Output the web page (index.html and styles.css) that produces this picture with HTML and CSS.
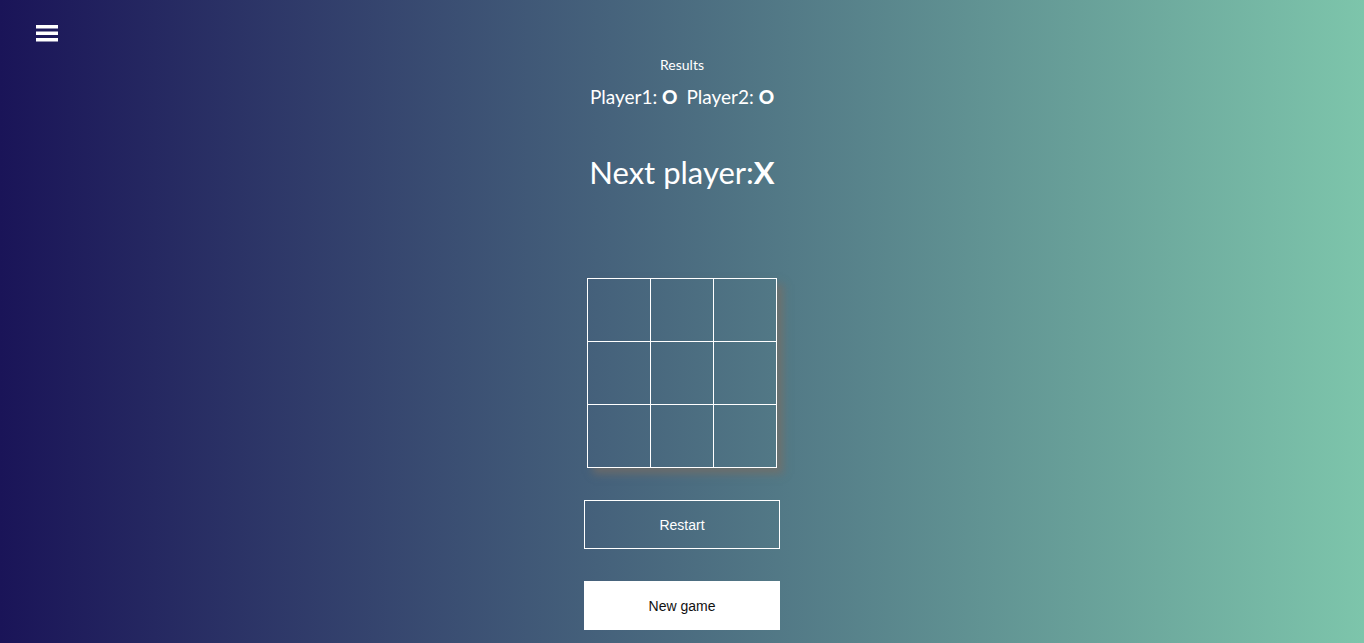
FILE: index.html
```html
<!DOCTYPE html>
<html>
<head>
<meta charset="utf-8">
<link rel="stylesheet" href="styles.css">
</head>
<body>
<div class="page">
  <button class="menu" aria-label="menu">
    <svg width="22" height="18" viewBox="0 0 22 18"><rect x="0" y="1" width="22" height="3.5" fill="#fff"/><rect x="0" y="7.5" width="22" height="3.5" fill="#fff"/><rect x="0" y="14" width="22" height="3.5" fill="#fff"/></svg>
  </button>
  <main class="game">
    <div class="results">
      <div class="results-title">Results</div>
      <div class="scores"><span>Player1: <b>O</b></span><span>Player2: <b>O</b></span></div>
    </div>
    <h1 class="next">Next player:<b>X</b></h1>
    <div class="board">
      <div class="cell"></div><div class="cell"></div><div class="cell"></div>
      <div class="cell"></div><div class="cell"></div><div class="cell"></div>
      <div class="cell"></div><div class="cell"></div><div class="cell"></div>
    </div>
    <button class="btn btn-outline">Restart</button>
    <button class="btn btn-solid">New game</button>
  </main>
</div>
</body>
</html>
```
FILE: styles.css
```css
html, body {
  margin: 0;
  height: 100%;
}
body {
  background: linear-gradient(to right, #1a1458 0%, #4b6c80 50%, #7dc5ab 100%);
  font-family: "Lato", "Open Sans", sans-serif;
  color: #fff;
  overflow: hidden;
}
.page {
  position: relative;
  height: 100%;
}
.menu {
  position: absolute;
  left: 36px;
  top: 24px;
  padding: 0;
  border: 0;
  background: none;
  line-height: 0;
}
.game {
  display: flex;
  flex-direction: column;
  align-items: center;
  padding-top: 56px;
}
.results-title {
  font-size: 14px;
  text-align: center;
  line-height: 18px;
}
.scores {
  margin-top: 11px;
  display: flex;
  gap: 9px;
  font-size: 19px;
  line-height: 24px;
}
.scores b {
  font-weight: 900;
}
.next {
  margin: 45px 0 0;
  font-size: 31px;
  font-weight: 400;
  line-height: 36px;
}
.next b {
  font-weight: 700;
}
.board {
  margin-top: 88px;
  display: grid;
  grid-template-columns: repeat(3, 63px);
  grid-template-rows: repeat(3, 63px);
  width: 190px;
  height: 190px;
  box-sizing: border-box;
  border-top: 1px solid #fff;
  border-left: 1px solid #fff;
  box-shadow: 6px 6px 8px rgba(120, 110, 100, 0.7);
}
.cell {
  border-right: 1px solid #fff;
  border-bottom: 1px solid #fff;
}
.btn {
  width: 196px;
  height: 49px;
  font-family: "Liberation Sans", Arial, sans-serif;
  font-size: 14px;
  cursor: pointer;
}
.btn-outline {
  margin-top: 32px;
  background: transparent;
  border: 1px solid #fff;
  color: #fff;
}
.btn-solid {
  margin-top: 32px;
  background: #fff;
  border: 0;
  color: #111;
}
```
